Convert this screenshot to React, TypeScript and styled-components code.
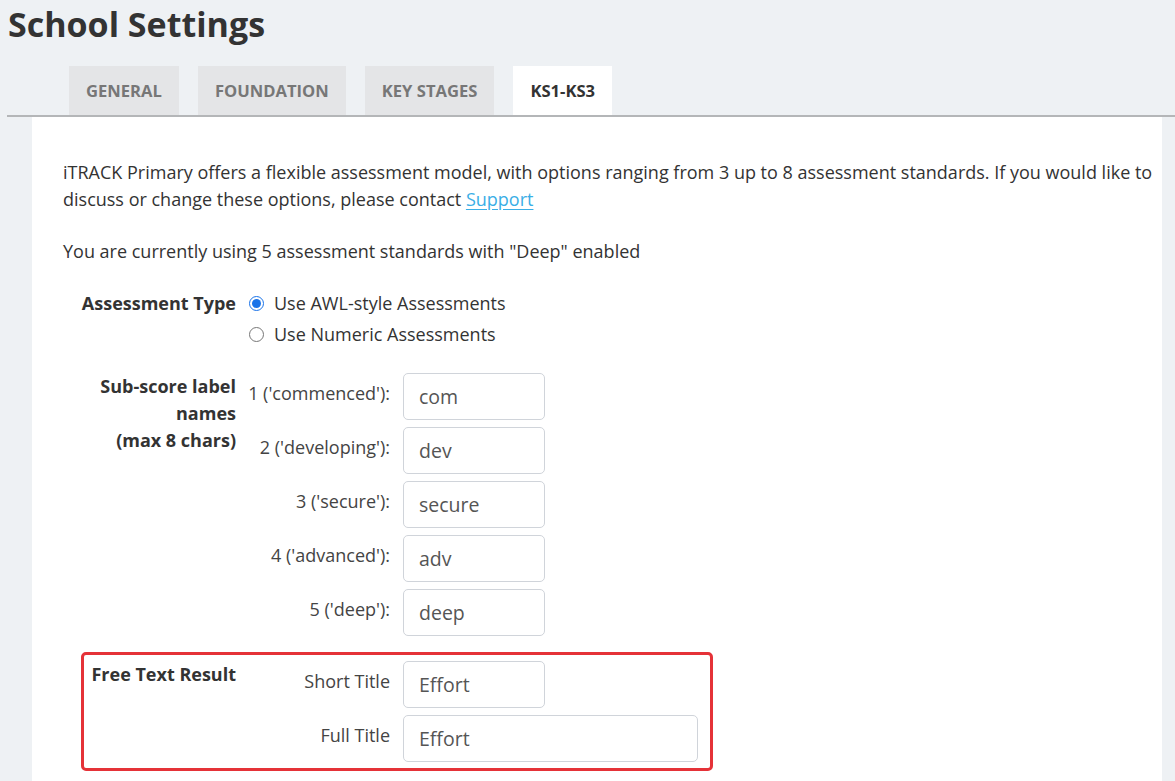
import React from "react";
import styled, { createGlobalStyle } from "styled-components";

const GlobalStyle = createGlobalStyle`
  body {
    margin: 0;
    background: #eef1f4;
    font-family: "Open Sans", "Liberation Sans", sans-serif;
    color: #333;
  }
`;

const Page = styled.div`
  min-height: 781px;
  display: flex;
  flex-direction: column;
`;

const Title = styled.h1`
  margin: 0;
  padding: 4px 0 0 8px;
  height: 66px;
  box-sizing: border-box;
  font-size: 34px;
  font-weight: 700;
  line-height: 40px;
  color: #333;
`;

const TabBar = styled.div`
  display: flex;
  gap: 19px;
  margin-left: 7px;
  padding-left: 62px;
  border-bottom: 2px solid #b4b6b8;
`;

const Tab = styled.div<{ $active?: boolean }>`
  height: 49px;
  padding: 0 17px;
  display: flex;
  align-items: center;
  font-size: 16.6px;
  font-weight: 700;
  text-transform: uppercase;
  background: ${(p) => (p.$active ? "#fff" : "#e4e5e7")};
  color: ${(p) => (p.$active ? "#333" : "#777")};
`;

const Panel = styled.div`
  flex: 1;
  background: #fff;
  margin: 0 13px 0 32px;
  padding: 42px 8px 0 31px;
`;

const Para = styled.p`
  margin: 0 0 25px;
  font-size: 18px;
  line-height: 27px;
  color: #333;
`;

const SupportLink = styled.a`
  color: #3aaee6;
  text-decoration: underline;
  text-underline-offset: 3px;
`;

const Form = styled.div`
  display: flex;
  flex-direction: column;
`;

const Row = styled.div<{ $labelWidth?: number; $gap?: number }>`
  display: grid;
  grid-template-columns: ${(p) => p.$labelWidth ?? 173}px 1fr;
  column-gap: 12px;
  margin-bottom: ${(p) => p.$gap ?? 0}px;
`;

const GroupLabel = styled.div`
  text-align: right;
  font-size: 18px;
  font-weight: 700;
  line-height: 27px;
  color: #333;
`;

const Options = styled.div`
  display: flex;
  flex-direction: column;
  gap: 4px;
`;

const RadioLine = styled.label`
  display: flex;
  align-items: center;
  gap: 10px;
  font-size: 18px;
  line-height: 27px;
  color: #333;
`;

const Radio = styled.input`
  margin: 0 0 0 1px;
  width: 15px;
  height: 15px;
  accent-color: #1a73e8;
`;

const Fields = styled.div`
  display: flex;
  flex-direction: column;
  gap: 7px;
`;

const Field = styled.div`
  display: grid;
  grid-template-columns: 142px auto;
  column-gap: 13px;
  align-items: start;
`;

const FieldLabel = styled.div`
  text-align: right;
  padding-top: 7px;
  font-size: 18px;
  line-height: 27px;
  color: #444;
  white-space: nowrap;
`;

const TextInput = styled.input<{ $wide?: boolean }>`
  box-sizing: border-box;
  width: ${(p) => (p.$wide ? 295 : 142)}px;
  height: 47px;
  padding: 0 15px;
  border: 1px solid #d0d4da;
  border-radius: 5px;
  font-family: "Open Sans", "Liberation Sans", sans-serif;
  font-size: 19.5px;
  color: #555;
  background: #fff;
  outline: none;
`;

const Highlight = styled.div`
  margin-left: 18px;
  width: 632px;
  box-sizing: border-box;
  border: 3px solid #e53238;
  border-radius: 5px;
  padding: 6px 0;
`;

const subScores = [
  { label: "1 ('commenced'):", value: "com" },
  { label: "2 ('developing'):", value: "dev" },
  { label: "3 ('secure'):", value: "secure" },
  { label: "4 ('advanced'):", value: "adv" },
  { label: "5 ('deep'):", value: "deep" },
];

const tabs = ["General", "Foundation", "Key Stages", "KS1-KS3"];

export default function App() {
  return (
    <Page>
      <GlobalStyle />
      <Title>School Settings</Title>
      <TabBar>
        {tabs.map((t) => (
          <Tab key={t} $active={t === "KS1-KS3"}>
            {t}
          </Tab>
        ))}
      </TabBar>
      <Panel>
        <Para>
          iTRACK Primary offers a flexible assessment model, with options ranging from 3 up to 8
          assessment standards. If you would like to discuss or change these options, please
          contact <SupportLink href="#">Support</SupportLink>
        </Para>
        <Para>You are currently using 5 assessment standards with "Deep" enabled</Para>
        <Form>
          <Row $gap={25}>
            <GroupLabel>Assessment Type</GroupLabel>
            <Options>
              <RadioLine>
                <Radio type="radio" name="atype" defaultChecked />
                Use AWL-style Assessments
              </RadioLine>
              <RadioLine>
                <Radio type="radio" name="atype" />
                Use Numeric Assessments
              </RadioLine>
            </Options>
          </Row>
          <Row $gap={16}>
            <GroupLabel>
              Sub-score label names
              <br />
              (max 8 chars)
            </GroupLabel>
            <Fields>
              {subScores.map((s) => (
                <Field key={s.label}>
                  <FieldLabel>{s.label}</FieldLabel>
                  <TextInput defaultValue={s.value} />
                </Field>
              ))}
            </Fields>
          </Row>
          <Highlight>
            <Row $labelWidth={152}>
              <GroupLabel>Free Text Result</GroupLabel>
              <Fields>
                <Field>
                  <FieldLabel>Short Title</FieldLabel>
                  <TextInput defaultValue="Effort" />
                </Field>
                <Field>
                  <FieldLabel>Full Title</FieldLabel>
                  <TextInput $wide defaultValue="Effort" />
                </Field>
              </Fields>
            </Row>
          </Highlight>
        </Form>
      </Panel>
    </Page>
  );
}
